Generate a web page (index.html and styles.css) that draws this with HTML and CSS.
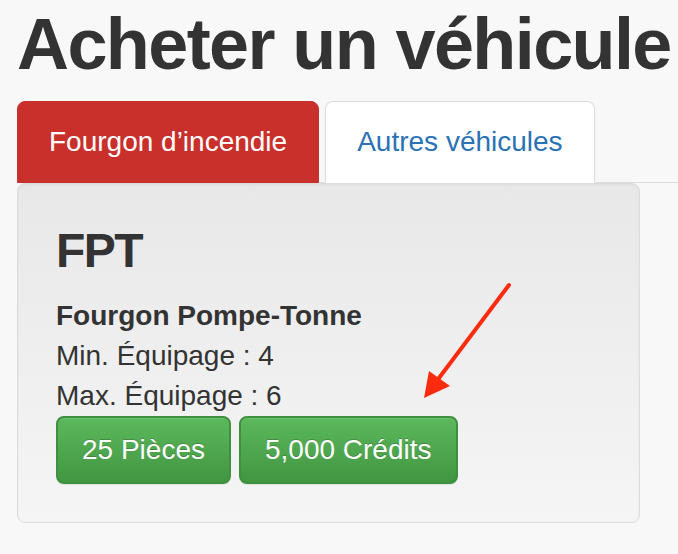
FILE: index.html
```html
<!DOCTYPE html>
<html lang="fr">
<head>
  <meta charset="UTF-8" />
  <meta name="viewport" content="width=device-width, initial-scale=1.0"/>
  <title>Acheter un véhicule</title>
  <link rel="stylesheet" href="styles.css">
</head>
<body>

<div class="page">
  <h1 class="page-title">Acheter un véhicule</h1>

  <ul class="nav-tabs">
    <li class="tab tab-fire"><a href="#">Fourgon d’incendie</a></li>
    <li class="tab tab-active"><a href="#">Autres véhicules</a></li>
  </ul>

  <div class="well">
    <h3 class="vehicle-code">FPT</h3>
    <div class="vehicle-name">Fourgon Pompe-Tonne</div>
    <div>Min. Équipage : 4</div>
    <div>Max. Équipage : 6</div>
    <div class="buy-group">
      <button class="btn-buy">25 Pièces</button>
      <button class="btn-buy">5,000 Crédits</button>
    </div>

    <!-- pointer on the credits button -->
    <svg class="pointer" width="130" height="140" viewBox="0 0 130 140">
      <line x1="108" y1="15" x2="38" y2="108" stroke="#fb2b0e" stroke-width="4" stroke-linecap="round"/>
      <polygon points="23,128 28,101 49,116" fill="#fb2b0e"/>
    </svg>
  </div>
</div>

</body>
</html>
```

FILE: styles.css
```css
* { box-sizing: border-box; }

body {
  margin: 0;
  font-family: "Liberation Sans", Arial, sans-serif;
  font-size: 28px;
  line-height: 40px;
  color: #333;
  background: #f8f8f8;
}

.page {
  padding: 5px 0 0 17px;
}

.page-title {
  margin: 0 0 17px;
  font-size: 72px;
  line-height: 1.1;
  font-weight: bold;
  letter-spacing: -1.6px;
}

.nav-tabs {
  display: flex;
  margin: 0;
  padding: 0;
  list-style: none;
  border-bottom: 1px solid #ddd;
}

.tab {
  margin-right: 6px;
  margin-bottom: -1px;
}

.tab a {
  display: block;
  padding: 20px 31px;
  border: 1px solid transparent;
  border-radius: 8px 8px 0 0;
  text-decoration: none;
}

.tab-fire a {
  background: #ca302b;
  border-color: #ca302b;
  color: #fff;
}

.tab-active a {
  background: #fff;
  border-color: #ddd #ddd transparent;
  color: #2a72b5;
}

.well {
  position: relative;
  width: 623px;
  padding: 38px;
  border: 1px solid #dcdcdc;
  border-radius: 8px;
  background: linear-gradient(to bottom, #e8e8e8 0%, #f5f5f5 100%);
  box-shadow: inset 0 1px 3px rgba(0,0,0,0.05), 0 1px 0 rgba(255,255,255,0.1);
}

.vehicle-code {
  margin: 3px 0 18px;
  font-size: 48px;
  line-height: 1.1;
  font-weight: bold;
  letter-spacing: -1.5px;
}

.vehicle-name {
  font-weight: bold;
}

.buy-group {
  display: flex;
  gap: 8px;
}

.btn-buy {
  padding: 12px 24px;
  font-family: inherit;
  font-size: 28px;
  line-height: 40px;
  color: #fff;
  text-shadow: 0 -1px 0 rgba(0,0,0,0.2);
  background: linear-gradient(to bottom, #5cb85c 0%, #419641 100%);
  border: 2px solid #3e8f3e;
  border-radius: 8px;
  box-shadow: inset 0 1px 0 rgba(255,255,255,0.15), 0 1px 1px rgba(0,0,0,0.075);
  cursor: pointer;
}

.pointer {
  position: absolute;
  left: 383px;
  top: 86px;
}
```
